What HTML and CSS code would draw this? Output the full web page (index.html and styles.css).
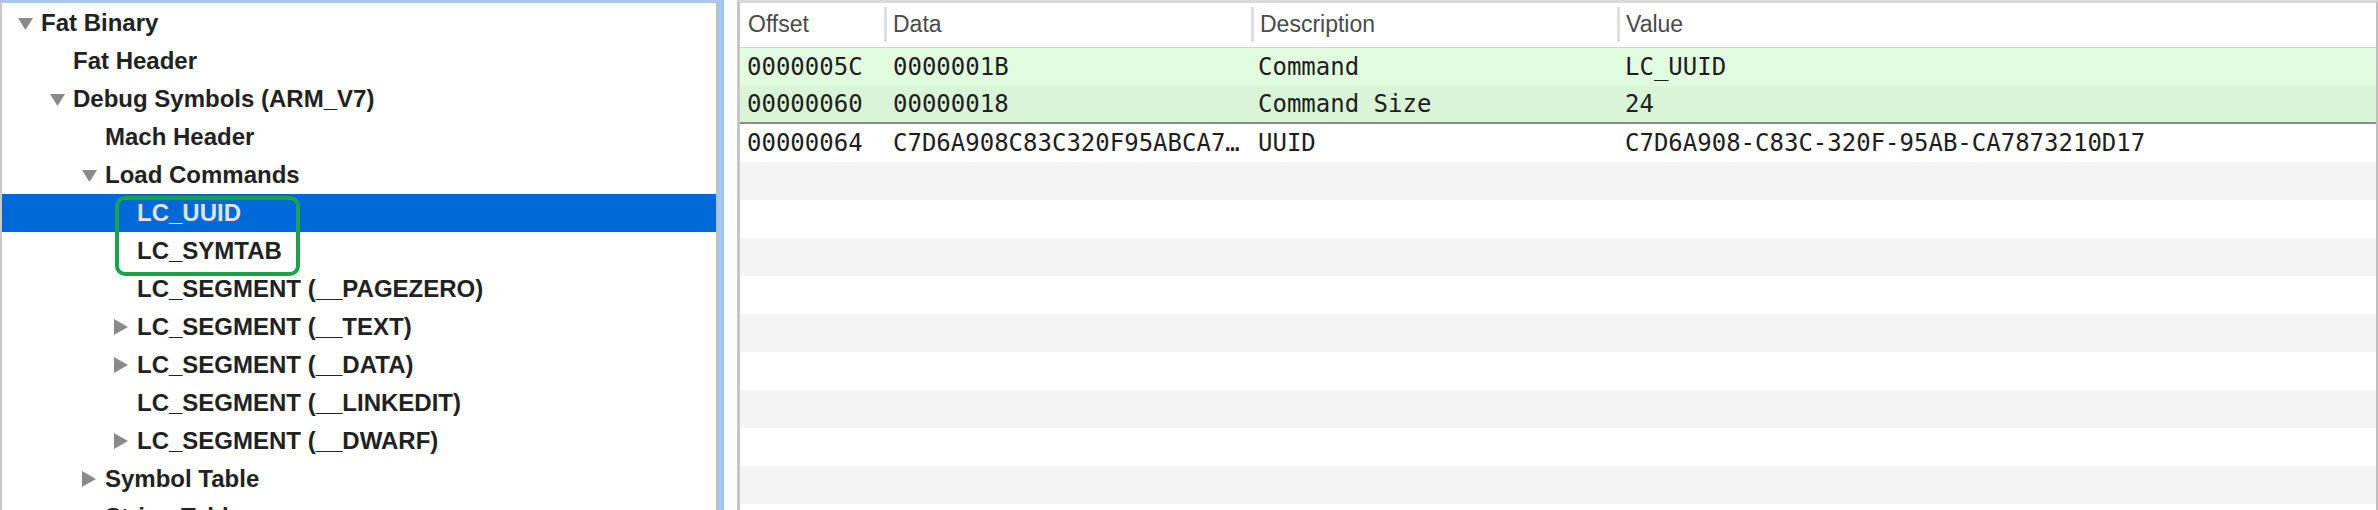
FILE: index.html
```html
<!DOCTYPE html>
<html>
<head>
<meta charset="utf-8">
<link rel="stylesheet" href="styles.css">
</head>
<body>
<div class="app">
  <div class="tree-pane">
    <div class="tree">
      <div class="row lvl0"><span class="disc"><svg class="tri-down" viewBox="0 0 15 12"><polygon points="0,0 15,0 7.5,12"/></svg></span><span class="label">Fat Binary</span></div>
      <div class="row lvl1"><span class="disc"></span><span class="label">Fat Header</span></div>
      <div class="row lvl1"><span class="disc"><svg class="tri-down" viewBox="0 0 15 12"><polygon points="0,0 15,0 7.5,12"/></svg></span><span class="label">Debug Symbols (ARM_V7)</span></div>
      <div class="row lvl2"><span class="disc"></span><span class="label">Mach Header</span></div>
      <div class="row lvl2"><span class="disc"><svg class="tri-down" viewBox="0 0 15 12"><polygon points="0,0 15,0 7.5,12"/></svg></span><span class="label">Load Commands</span></div>
      <div class="row lvl3 selected"><span class="disc"></span><span class="label">LC_UUID</span></div>
      <div class="row lvl3"><span class="disc"></span><span class="label">LC_SYMTAB</span></div>
      <div class="row lvl3"><span class="disc"></span><span class="label">LC_SEGMENT (__PAGEZERO)</span></div>
      <div class="row lvl3"><span class="disc"><svg class="tri-right" viewBox="0 0 14 16"><polygon points="0,0 14,8 0,16"/></svg></span><span class="label">LC_SEGMENT (__TEXT)</span></div>
      <div class="row lvl3"><span class="disc"><svg class="tri-right" viewBox="0 0 14 16"><polygon points="0,0 14,8 0,16"/></svg></span><span class="label">LC_SEGMENT (__DATA)</span></div>
      <div class="row lvl3"><span class="disc"></span><span class="label">LC_SEGMENT (__LINKEDIT)</span></div>
      <div class="row lvl3"><span class="disc"><svg class="tri-right" viewBox="0 0 14 16"><polygon points="0,0 14,8 0,16"/></svg></span><span class="label">LC_SEGMENT (__DWARF)</span></div>
      <div class="row lvl2"><span class="disc"><svg class="tri-right" viewBox="0 0 14 16"><polygon points="0,0 14,8 0,16"/></svg></span><span class="label">Symbol Table</span></div>
      <div class="row lvl2"><span class="disc"></span><span class="label">String Table</span></div>
      <div class="highlight-box"></div>
    </div>
  </div>
  <div class="splitter"></div>
  <div class="table-pane">
    <div class="thead">
      <div class="th first">Offset</div>
      <div class="th">Data</div>
      <div class="th">Description</div>
      <div class="th">Value</div>
    </div>
    <div class="tbody">
      <div class="tr green1"><div class="td">0000005C</div><div class="td">0000001B</div><div class="td">Command</div><div class="td">LC_UUID</div></div>
      <div class="tr green2"><div class="td">00000060</div><div class="td">00000018</div><div class="td">Command Size</div><div class="td">24</div></div>
      <div class="tr"><div class="td">00000064</div><div class="td">C7D6A908C83C320F95ABCA7…</div><div class="td">UUID</div><div class="td">C7D6A908-C83C-320F-95AB-CA7873210D17</div></div>
      <div class="tr stripe"></div>
      <div class="tr"></div>
      <div class="tr stripe"></div>
      <div class="tr"></div>
      <div class="tr stripe"></div>
      <div class="tr"></div>
      <div class="tr stripe"></div>
      <div class="tr"></div>
      <div class="tr stripe"></div>
    </div>
  </div>
</div>
</body>
</html>
```
FILE: styles.css
```css
html, body {
  margin: 0;
  padding: 0;
  background: #ffffff;
}
body {
  width: 2378px;
  height: 510px;
  overflow: hidden;
}
.app {
  display: flex;
  height: 510px;
}
.tree-pane {
  width: 714px;
  flex: none;
  border-left: 2px solid #c9c9c9;
  border-top: 3px solid #a9c8ee;
  border-right: 2px solid #bdbdbd;
  background: #ffffff;
  overflow: hidden;
}
.tree {
  position: relative;
  padding-top: 1px;
}
.row {
  height: 38px;
  display: flex;
  align-items: center;
  font-family: "Liberation Sans", Arial, sans-serif;
  font-weight: 700;
  font-size: 24px;
  color: #222222;
  white-space: nowrap;
}
.lvl0 { padding-left: 16px; }
.lvl1 { padding-left: 48px; }
.lvl2 { padding-left: 80px; }
.lvl3 { padding-left: 112px; }
.disc {
  width: 23px;
  flex: none;
  display: flex;
  align-items: center;
}
.tri-down {
  width: 15px;
  height: 12px;
  fill: #8a8a8a;
  margin-top: 2px;
}
.tri-right {
  width: 14px;
  height: 16px;
  fill: #8a8a8a;
}
.row.selected {
  background: #0069d9;
  color: #dbe5f6;
}
.highlight-box {
  position: absolute;
  left: 113px;
  top: 193px;
  width: 177px;
  height: 72px;
  border: 4px solid #19a34a;
  border-radius: 10px;
}
.splitter {
  width: 13px;
  flex: none;
  border-left: 6px solid #a4c7f6;
  background: #ffffff;
}
.table-pane {
  flex: 1;
  border-left: 3px solid #c6c6c6;
  border-top: 3px solid #d9d9d9;
  border-right: 2px solid #bfbfbf;
  overflow: hidden;
}
.thead {
  height: 44px;
  border-bottom: 1px solid #d2d2d2;
  display: grid;
  grid-template-columns: 144px 367px 366px 1fr;
  align-items: start;
}
.th {
  margin-top: 4px;
  height: 35px;
  display: flex;
  align-items: center;
  padding-left: 6px;
  border-left: 3px solid #dedede;
  font-family: "Liberation Sans", Arial, sans-serif;
  font-size: 23px;
  color: #4a4a4a;
  white-space: nowrap;
}
.th.first {
  border-left: none;
  padding-left: 8px;
}
.tr {
  height: 38px;
  display: grid;
  grid-template-columns: 146px 365px 367px 1fr;
  align-items: center;
  font-family: "DejaVu Sans Mono", "Liberation Mono", monospace;
  font-size: 24px;
  color: #1e1e1e;
  white-space: nowrap;
}
.td {
  padding-left: 7px;
  overflow: hidden;
}
.tr.green1 { background: #e1fbde; }
.tr.green2 {
  background: #d9f4d6;
  height: 36px;
  border-bottom: 2px solid #8a8a8a;
}
.tr.stripe { background: #f4f4f4; }
```
